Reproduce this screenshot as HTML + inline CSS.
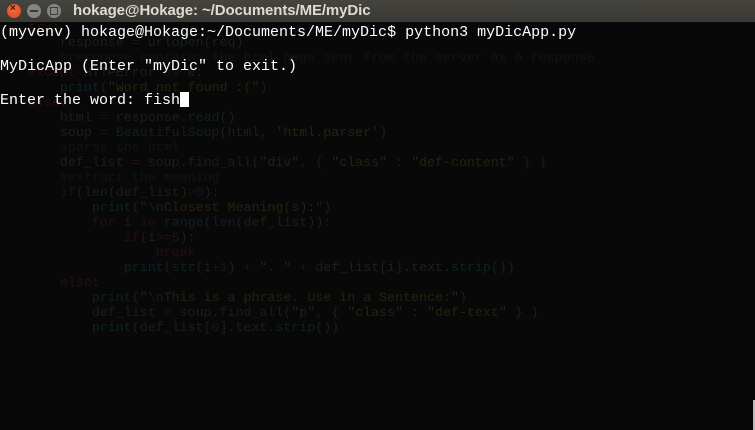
<!DOCTYPE html>
<html><head><style>
html,body{margin:0;padding:0;width:755px;height:430px;overflow:hidden;background:#080808;}
.title{position:absolute;left:0;top:0;width:755px;height:22px;background:linear-gradient(#45443f,#3a3935);}
.title .t{position:absolute;left:73px;top:2px;font:bold 15px "Liberation Sans",sans-serif;color:#dfdbd2;white-space:nowrap;letter-spacing:-0.1px;}
.btn{position:absolute;top:4px;width:14px;height:14px;border-radius:50%;}
.bg{position:absolute;left:28px;top:20px;font:13.3px/15px "Liberation Mono",monospace;color:#1e1e1a;white-space:pre;}
.k{color:#2a0d12}.f{color:#0e2226}.s{color:#24230f}.c{color:#141414}.n{color:#1a1426}
.fg{position:absolute;left:0;top:25px;font:15px/16.75px "Liberation Mono",monospace;color:#fff;white-space:pre;}
.cur{display:inline-block;width:9px;height:15px;background:#fff;vertical-align:-3px;}
</style></head><body>
<div class="bg"><span class="k">try</span>:
    response <span class="k">=</span> <span class="f">urlopen</span>(req)
    <span class="c">#response contains the html page sent from the server as a response</span>
<span class="k">except</span> HTTPError <span class="k">as</span> e:
    <span class="f">print</span>(<span class="s">"Word not found :("</span>)
<span class="k">else</span>:
    html <span class="k">=</span> response.<span class="f">read</span>()
    soup <span class="k">=</span> <span class="f">BeautifulSoup</span>(html, <span class="s">'html.parser'</span>)
    <span class="c">#parse the html</span>
    def_list <span class="k">=</span> soup.<span class="f">find_all</span>(<span class="s">"div"</span>, { <span class="s">"class"</span> : <span class="s">"def-content"</span> } )
    <span class="c">#extract the meaning</span>
    <span class="k">if</span>(<span class="f">len</span>(def_list)<span class="k">&gt;</span><span class="n">0</span>):
        <span class="f">print</span>(<span class="s">"<span class="f">\n</span>Closest Meaning(s):"</span>)
        <span class="k">for</span> i <span class="k">in</span> <span class="f">range</span>(<span class="f">len</span>(def_list)):
            <span class="k">if</span>(i<span class="k">&gt;=</span><span class="n">5</span>):
                <span class="k">break</span>
            <span class="f">print</span>(<span class="f">str</span>(i<span class="k">+</span><span class="n">1</span>) <span class="k">+</span> <span class="s">". "</span> <span class="k">+</span> def_list[i].text.<span class="f">strip</span>())
    <span class="k">else</span>:
        <span class="f">print</span>(<span class="s">"<span class="f">\n</span>This is a phrase. Use in a Sentence:"</span>)
        def_list <span class="k">=</span> soup.<span class="f">find_all</span>(<span class="s">"p"</span>, { <span class="s">"class"</span> : <span class="s">"def-text"</span> } )
        <span class="f">print</span>(def_list[<span class="n">0</span>].text.<span class="f">strip</span>())</div>
<div class="fg">(myvenv) hokage@Hokage:~/Documents/ME/myDic$ python3 myDicApp.py

MyDicApp (Enter "myDic" to exit.)

Enter the word: fish<span class="cur"></span></div>
<div class="title">
<div class="btn" style="left:7px;background:radial-gradient(circle at 50% 40%,#f26d3d,#d9491a);"></div>
<div class="btn" style="left:27px;background:#86857f;"></div>
<div class="btn" style="left:47px;background:#86857f;"></div>
<div style="position:absolute;left:10px;top:3px;font:bold 10px 'Liberation Sans',sans-serif;color:#3a1a0c;">×</div>
<div style="position:absolute;left:30px;top:10px;width:8px;height:2px;background:#3c3b37;"></div>
<div style="position:absolute;left:50px;top:7px;width:6px;height:6px;border:1px solid #3c3b37;"></div>
<div class="t">hokage@Hokage: ~/Documents/ME/myDic</div>
</div>
<div style="position:absolute;left:753px;top:400px;width:2px;height:30px;background:#bbb;"></div>
</body></html>
